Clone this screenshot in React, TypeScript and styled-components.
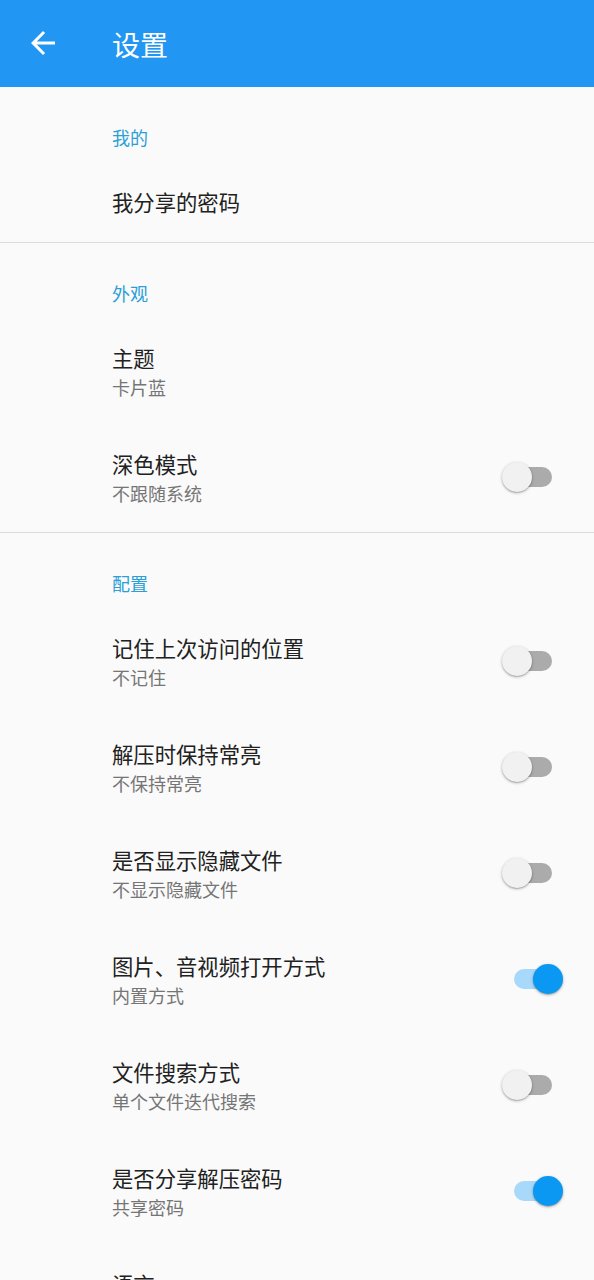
import React from "react";
import styled, { createGlobalStyle } from "styled-components";

const Global = createGlobalStyle`
  html, body { margin: 0; padding: 0; background: #fafafa; }
  body { font-family: "Noto Sans CJK SC", "Noto Sans", Roboto, sans-serif; }
  * { box-sizing: border-box; }
`;

const Page = styled.div`
  width: 594px;
  height: 1280px;
  overflow: hidden;
  background: #fafafa;
  display: flex;
  flex-direction: column;
`;

const AppBar = styled.header`
  height: 87px;
  flex: none;
  background: #2196f3;
  display: flex;
  align-items: center;
  padding-left: 25px;
`;

const BackButton = styled.div`
  width: 36px;
  height: 36px;
  display: flex;
  align-items: center;
  justify-content: center;
  margin-top: -2px;
`;

const AppTitle = styled.h1`
  margin: 0 0 0 51px;
  font-size: 28px;
  font-weight: 400;
  color: #ffffff;
  line-height: 36px;
`;

const Section = styled.section<{ $divider?: boolean }>`
  display: flex;
  flex-direction: column;
  border-bottom: ${(p) => (p.$divider ? "1px solid #dcdcdc" : "none")};
`;

const SectionHeader = styled.div`
  padding: 38px 0 15px 112px;
  font-size: 18px;
  line-height: 24px;
  color: #2b9fd6;
`;

const Item = styled.div<{ $single?: boolean }>`
  display: flex;
  align-items: center;
  padding: 23px 42px 25px 112px;
  min-height: ${(p) => (p.$single ? "78px" : "106px")};
`;

const Texts = styled.div`
  flex: 1;
  display: flex;
  flex-direction: column;
`;

const Title = styled.div`
  font-size: 21.33px;
  line-height: 30px;
  color: #212121;
`;

const Summary = styled.div`
  font-size: 18px;
  line-height: 28px;
  color: #757575;
`;

const SwitchTrack = styled.div<{ $on: boolean }>`
  position: relative;
  width: 38px;
  height: 20px;
  border-radius: 10px;
  margin-top: -2px;
  background: ${(p) => (p.$on ? "#a9d9fa" : "#ababab")};
  flex: none;
`;

const SwitchThumb = styled.div<{ $on: boolean }>`
  position: absolute;
  top: -5px;
  left: ${(p) => (p.$on ? "19px" : "-12px")};
  width: 30px;
  height: 30px;
  border-radius: 50%;
  background: ${(p) => (p.$on ? "#0a98f2" : "#f1f1f1")};
  box-shadow: 0 1px 3px rgba(0, 0, 0, 0.3), 0 1px 1px rgba(0, 0, 0, 0.12);
`;

const Switch = ({ on }: { on: boolean }) => (
  <SwitchTrack $on={on}>
    <SwitchThumb $on={on} />
  </SwitchTrack>
);

const BackArrow = () => (
  <svg width="36" height="36" viewBox="0 0 24 24" fill="#ffffff">
    <path d="M20 11H7.83l5.59-5.59L12 4l-8 8 8 8 1.41-1.41L7.83 13H20v-2z" />
  </svg>
);

type Pref = { title: string; summary?: string; toggle?: boolean };

const configItems: Pref[] = [
  { title: "记住上次访问的位置", summary: "不记住", toggle: false },
  { title: "解压时保持常亮", summary: "不保持常亮", toggle: false },
  { title: "是否显示隐藏文件", summary: "不显示隐藏文件", toggle: false },
  { title: "图片、音视频打开方式", summary: "内置方式", toggle: true },
  { title: "文件搜索方式", summary: "单个文件迭代搜索", toggle: false },
  { title: "是否分享解压密码", summary: "共享密码", toggle: true },
  { title: "语言", summary: "跟随系统" },
];

const PrefRow = ({ p }: { p: Pref }) => (
  <Item $single={!p.summary}>
    <Texts>
      <Title>{p.title}</Title>
      {p.summary && <Summary>{p.summary}</Summary>}
    </Texts>
    {p.toggle !== undefined && <Switch on={p.toggle} />}
  </Item>
);

export default function App() {
  return (
    <>
      <Global />
      <Page>
        <AppBar>
          <BackButton>
            <BackArrow />
          </BackButton>
          <AppTitle>设置</AppTitle>
        </AppBar>
        <Section $divider>
          <SectionHeader>我的</SectionHeader>
          <PrefRow p={{ title: "我分享的密码" }} />
        </Section>
        <Section $divider>
          <SectionHeader>外观</SectionHeader>
          <PrefRow p={{ title: "主题", summary: "卡片蓝" }} />
          <PrefRow p={{ title: "深色模式", summary: "不跟随系统", toggle: false }} />
        </Section>
        <Section>
          <SectionHeader>配置</SectionHeader>
          {configItems.map((p) => (
            <PrefRow key={p.title} p={p} />
          ))}
        </Section>
      </Page>
    </>
  );
}
